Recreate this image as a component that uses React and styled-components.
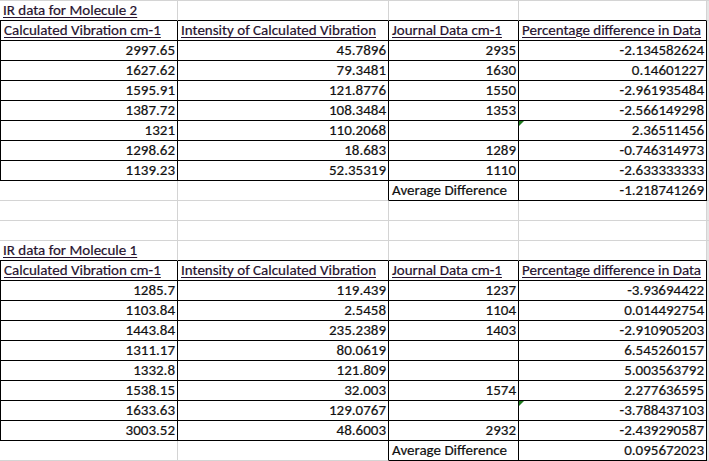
import styled, { createGlobalStyle } from 'styled-components';

const GlobalStyle = createGlobalStyle`
  html, body {
    margin: 0;
    padding: 0;
    background: #ffffff;
  }
  body {
    font-family: 'Carlito', Lato, 'Liberation Sans', sans-serif;
  }
`;

const GRID = '#d4d4d4';
const INK = '#000000';

const Sheet = styled.div`
  width: 709px;
  border-top: 1px solid ${GRID};
  overflow: hidden;
`;

const Row = styled.div`
  display: grid;
  grid-template-columns: 178px 211px 130px 188px 2px;
  height: 20px;
`;

const Cell = styled.div`
  position: relative;
  box-sizing: border-box;
  height: 20px;
  display: flex;
  align-items: flex-end;
  justify-content: ${(p) => (p.$num ? 'flex-end' : 'flex-start')};
  padding: 0 ${(p) => (p.$num ? '2px' : '0')} 1px ${(p) => (p.$num ? '0' : '3px')};
  border-right: 1px solid ${(p) => (p.$r ? INK : GRID)};
  border-bottom: 1px solid ${(p) => (p.$b ? INK : GRID)};
  border-left: ${(p) => (p.$l ? `1px solid ${INK}` : 'none')};
  font-size: 15px;
  line-height: 17px;
  color: #111111;
  -webkit-text-stroke: 0.2px currentColor;
  white-space: nowrap;
  overflow: visible;
`;

const Filler = styled.div`
  background: #e6e6e6;
  border-bottom: 1px solid ${GRID};
  box-sizing: border-box;
`;

const Heading = styled.span`
  text-decoration: underline;
  text-underline-offset: 2px;
  color: #26122e;
`;

const ErrorMark = styled.span`
  position: absolute;
  left: 0;
  top: 0;
  width: 0;
  height: 0;
  border-top: 5px solid #1f7a1f;
  border-right: 5px solid transparent;
`;

const mol2 = [
  ['2997.65', '45.7896', '2935', '-2.134582624'],
  ['1627.62', '79.3481', '1630', '0.14601227'],
  ['1595.91', '121.8776', '1550', '-2.961935484'],
  ['1387.72', '108.3484', '1353', '-2.566149298'],
  ['1321', '110.2068', '', '2.36511456', true],
  ['1298.62', '18.683', '1289', '-0.746314973'],
  ['1139.23', '52.35319', '1110', '-2.633333333'],
];

const mol1 = [
  ['1285.7', '119.439', '1237', '-3.93694422'],
  ['1103.84', '2.5458', '1104', '0.014492754'],
  ['1443.84', '235.2389', '1403', '-2.910905203'],
  ['1311.17', '80.0619', '', '6.545260157'],
  ['1332.8', '121.809', '', '5.003563792'],
  ['1538.15', '32.003', '1574', '2.277636595'],
  ['1633.63', '129.0767', '', '-3.788437103', true],
  ['3003.52', '48.6003', '2932', '-2.439290587'],
];

const headers = [
  'Calculated Vibration cm-1',
  'Intensity of Calculated Vibration',
  'Journal Data cm-1',
  'Percentage difference in Data',
];

const TitleRow = ({ text }) => (
  <Row>
    <Cell $b>
      <Heading>{text}</Heading>
    </Cell>
    <Cell $b />
    <Cell $b />
    <Cell $b />
    <Filler />
  </Row>
);

const HeaderRow = () => (
  <Row>
    {headers.map((h, i) => (
      <Cell key={h} $l={i === 0} $r $b>
        <Heading>{h}</Heading>
      </Cell>
    ))}
    <Filler />
  </Row>
);

const DataRow = ({ values }) => (
  <Row>
    {values.slice(0, 4).map((v, i) => (
      <Cell key={i} $num $l={i === 0} $r $b>
        {i === 3 && values[4] && <ErrorMark />}
        {v}
      </Cell>
    ))}
    <Filler />
  </Row>
);

const AverageRow = ({ value }) => (
  <Row>
    <Cell />
    <Cell $r />
    <Cell $r $b>
      Average Difference
    </Cell>
    <Cell $num $r $b>
      {value}
    </Cell>
    <Filler />
  </Row>
);

const EmptyRow = () => (
  <Row>
    <Cell />
    <Cell />
    <Cell />
    <Cell />
    <Filler />
  </Row>
);

const Table = ({ title, rows, average }) => (
  <>
    <TitleRow text={title} />
    <HeaderRow />
    {rows.map((r) => (
      <DataRow key={r[0]} values={r} />
    ))}
    <AverageRow value={average} />
  </>
);

export default function App() {
  return (
    <>
      <GlobalStyle />
      <Sheet>
        <Table title='IR data for Molecule 2' rows={mol2} average='-1.218741269' />
        <EmptyRow />
        <EmptyRow />
        <Table title='IR data for Molecule 1' rows={mol1} average='0.095672023' />
      </Sheet>
    </>
  );
}
